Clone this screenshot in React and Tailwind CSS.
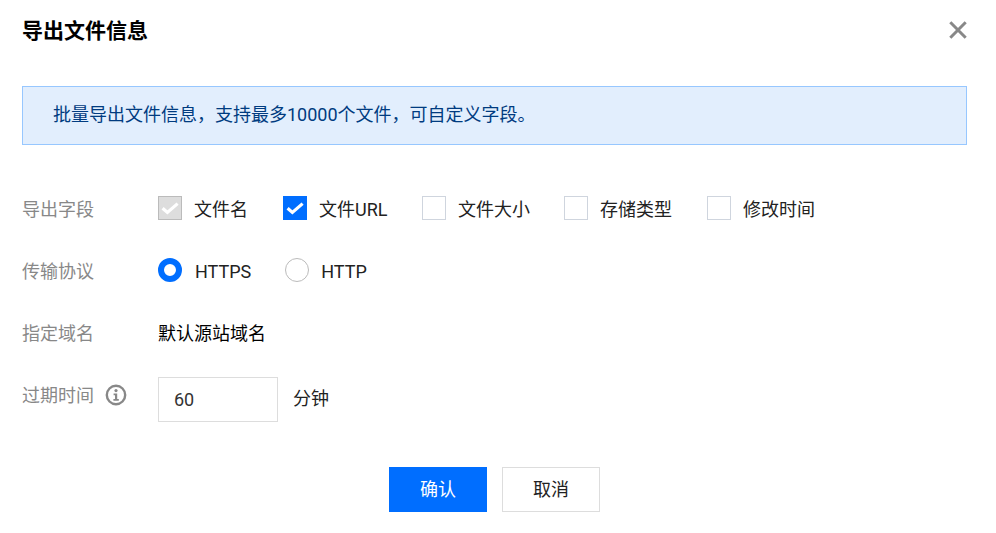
import React from 'react';

const FONT = 'font-["Roboto","Noto_Sans_CJK_SC",sans-serif]';

const FIELDS = [
  { label: '文件名', state: 'disabled' },
  { label: '文件URL', state: 'checked', labelClass: 'w-[68px]' },
  { label: '文件大小' },
  { label: '存储类型', itemClass: '-ml-px' },
  { label: '修改时间' },
];

const CheckItem = ({ label, state, labelClass = '', itemClass = '' }) => {
  let box = 'border border-[#cfd5de] bg-white';
  if (state === 'checked') box = 'bg-[#006eff]';
  if (state === 'disabled') box = 'border border-[#bbbbbb] bg-[#dddddd]';

  return (
    <label className={`flex items-center gap-3 ${itemClass}`}>
      <span className={`relative h-6 w-6 ${box}`}>
        {state && (
          <svg width="24" height="24" viewBox="0 0 24 24" className={state === 'disabled' ? 'absolute -top-px -left-px' : 'absolute top-0 left-0'}>
            <path d="M4.6 12.2 9.4 16.4 19.6 7.6" stroke="white" strokeWidth="3.2" fill="none" />
          </svg>
        )}
      </span>
      <span className={`h-6 text-[18px] leading-[28px] whitespace-nowrap text-[#222222] ${labelClass}`}>{label}</span>
    </label>
  );
};

const Radio = ({ label, checked }) => (
  <label className={`flex items-center ${checked ? 'gap-[13px]' : 'gap-3'}`}>
    {checked ? (
      <span className="h-6 w-6 rounded-full border-[6.5px] border-[#006eff] bg-white" />
    ) : (
      <span className="h-6 w-6 rounded-full border border-[#bbbbbb] bg-white" />
    )}
    <span className="h-6 text-[18px] leading-[28px] text-[#222222]">{label}</span>
  </label>
);

const Row = ({ label, extra, className, labelClass = 'items-center', children }) => (
  <div className={`flex items-center ${className}`}>
    <div className={`flex w-[136px] gap-[11px] ${labelClass}`}>
      <span className="h-6 text-[18px] leading-[28px] text-[#888888]">{label}</span>
      {extra}
    </div>
    {children}
  </div>
);

const App = () => {
  return (
    <div className={`h-[533px] w-[996px] bg-white pl-[22px] pr-[29px] ${FONT}`}>
      {/* header */}
      <div className="flex h-[86px] items-start justify-between pt-[16px]">
        <h1 className="text-[21px] leading-[30px] font-bold text-black">导出文件信息</h1>
        <svg width="18" height="18" viewBox="0 0 18 18" className="mt-[5px] text-[#888888]">
          <path d="M1.3 1.3 16.7 16.7M16.7 1.3 1.3 16.7" stroke="currentColor" strokeWidth="3" fill="none" />
        </svg>
      </div>

      {/* tip */}
      <div className="flex h-[59px] items-center border border-[#97c7ff] bg-[#e2eefd] pb-[2px] pl-[30px] text-[18px] text-[#003b80]">
        批量导出文件信息，支持最多10000个文件，可自定义字段。
      </div>

      {/* form */}
      <Row label="导出字段" className="mt-[51px]">
        <div className="flex gap-[35px]">
          {FIELDS.map((f) => (
            <CheckItem key={f.label} {...f} />
          ))}
        </div>
      </Row>

      <Row label="传输协议" className="mt-[38px]">
        <div className="flex gap-[34px]">
          <Radio label="HTTPS" checked />
          <Radio label="HTTP" />
        </div>
      </Row>

      <Row label="指定域名" className="mt-[38px]">
        <span className="h-6 text-[18px] leading-[28px] text-black">默认源站域名</span>
      </Row>

      <Row
        label="过期时间"
        className="mt-[33px]"
        labelClass="items-center self-start mt-[5px]"
        extra={
          <svg width="22" height="22" viewBox="0 0 22 22" className="mt-[2px] text-[#888888]">
            <circle cx="11" cy="11" r="9.2" stroke="currentColor" strokeWidth="2.4" fill="none" />
            <circle cx="11" cy="6.6" r="1.6" fill="currentColor" />
            <path d="M8.6 9.4H12.2V15H13.8V16.8H8.4V15H10V11.2H8.6Z" fill="currentColor" />
          </svg>
        }
      >
        <div className="flex items-center gap-[15px]">
          <div className="flex h-[45px] w-[120px] items-center border border-[#dddddd] pl-[15px] text-[18px] text-[#333333]">
            60
          </div>
          <span className="h-6 text-[18px] leading-[22px] text-[#222222]">分钟</span>
        </div>
      </Row>

      {/* actions */}
      <div className="mt-[45px] flex justify-center gap-[15px]">
        <button className="h-[45px] w-[98px] bg-[#006eff] text-[18px] text-white">确认</button>
        <button className="h-[45px] w-[98px] border border-[#dddddd] bg-white text-[18px] text-[#222222]">取消</button>
      </div>
    </div>
  );
};

export default App;
